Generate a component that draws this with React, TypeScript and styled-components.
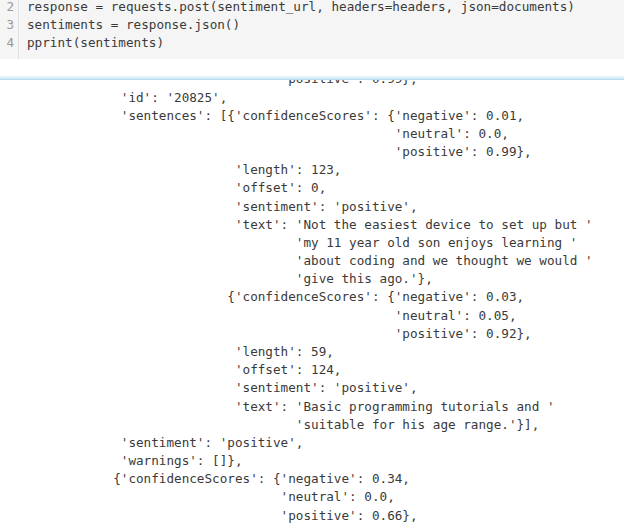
import React from "react";
import styled, { createGlobalStyle } from "styled-components";

const Global = createGlobalStyle`
  html, body {
    margin: 0;
    padding: 0;
    background: #ffffff;
    width: 624px;
    height: 526px;
    overflow: hidden;
  }
  #root {
    width: 624px;
    height: 526px;
    overflow: hidden;
  }
`;

const MONO = `"DejaVu Sans Mono", "Liberation Mono", monospace`;
const LH = 18.17;

const Notebook = styled.div`
  display: flex;
  flex-direction: column;
  width: 624px;
  height: 526px;
  background: #ffffff;
  font-family: ${MONO};
  font-size: 12.65px;
  line-height: ${LH}px;
`;

const CodeCell = styled.div`
  display: flex;
  height: 59px;
  background: #f5f5f5;
  overflow: hidden;
  flex-shrink: 0;
`;

const Gutter = styled.div`
  width: 19px;
  border-right: 1px solid #e0e0e0;
  display: flex;
  flex-direction: column;
  align-items: flex-end;
  margin-top: -2.4px;
  padding-right: 4px;
  box-sizing: border-box;
  flex-shrink: 0;
`;

const LineNo = styled.div`
  color: #999999;
  white-space: pre;
`;

const CodeLines = styled.div`
  display: flex;
  flex-direction: column;
  margin-top: -2.4px;
  padding-left: 8px;
`;

const CodeLine = styled.div`
  color: #3a3a3a;
  white-space: pre;
`;

const Gap = styled.div`
  height: 16px;
  flex-shrink: 0;
`;

const ScrollEdge = styled.div`
  height: 5px;
  flex-shrink: 0;
  background: linear-gradient(
    to bottom,
    rgba(200, 232, 245, 0) 0%,
    rgba(200, 232, 245, 0.6) 50%,
    #cbe8f4 75%,
    #a8d7ec 100%
  );
`;

const OutputArea = styled.div`
  flex: 1;
  overflow: hidden;
  background: #ffffff;
`;

const OutputText = styled.div`
  display: flex;
  flex-direction: column;
  margin-top: -9.6px;
  margin-left: -1px;
`;

const OutLine = styled.div`
  color: #3a3a3a;
  white-space: pre;
`;

const code: [number, string][] = [
  [2, "response = requests.post(sentiment_url, headers=headers, json=documents)"],
  [3, "sentiments = response.json()"],
  [4, "pprint(sentiments)"],
];

const out: [number, string][] = [
  [37, "'positive': 0.99},"],
  [16, "'id': '20825',"],
  [16, "'sentences': [{'confidenceScores': {'negative': 0.01,"],
  [52, "'neutral': 0.0,"],
  [52, "'positive': 0.99},"],
  [31, "'length': 123,"],
  [31, "'offset': 0,"],
  [31, "'sentiment': 'positive',"],
  [31, "'text': 'Not the easiest device to set up but '"],
  [39, "'my 11 year old son enjoys learning '"],
  [39, "'about coding and we thought we would '"],
  [39, "'give this ago.'},"],
  [30, "{'confidenceScores': {'negative': 0.03,"],
  [52, "'neutral': 0.05,"],
  [52, "'positive': 0.92},"],
  [31, "'length': 59,"],
  [31, "'offset': 124,"],
  [31, "'sentiment': 'positive',"],
  [31, "'text': 'Basic programming tutorials and '"],
  [39, "'suitable for his age range.'}],"],
  [16, "'sentiment': 'positive',"],
  [16, "'warnings': []},"],
  [15, "{'confidenceScores': {'negative': 0.34,"],
  [37, "'neutral': 0.0,"],
  [37, "'positive': 0.66},"],
];

export default function App() {
  return (
    <>
      <Global />
      <Notebook>
        <CodeCell>
          <Gutter>
            {code.map(([n]) => (
              <LineNo key={n}>{n}</LineNo>
            ))}
          </Gutter>
          <CodeLines>
            {code.map(([n, t]) => (
              <CodeLine key={n}>{t}</CodeLine>
            ))}
          </CodeLines>
        </CodeCell>
        <Gap />
        <ScrollEdge />
        <OutputArea>
          <OutputText>
            {out.map(([indent, t], i) => (
              <OutLine key={i}>{" ".repeat(indent) + t}</OutLine>
            ))}
          </OutputText>
        </OutputArea>
      </Notebook>
    </>
  );
}
